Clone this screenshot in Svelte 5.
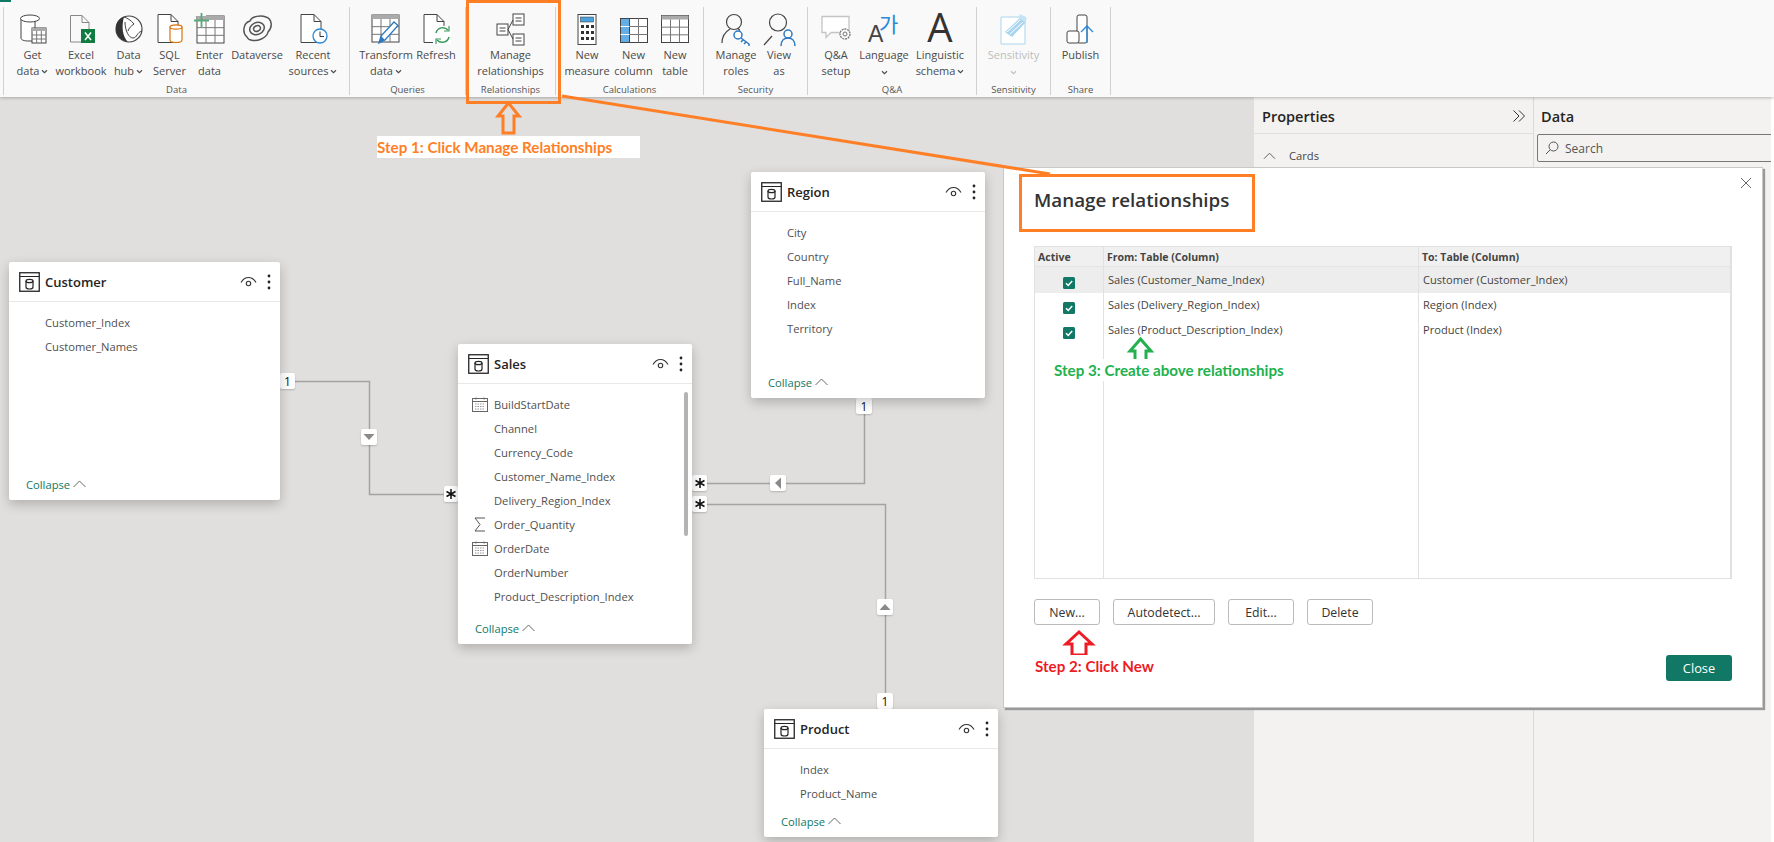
<script>
  const D = '#444';
  const grid = (x, y, w, h, cols, rows, head) => {
    let s = `<rect x="${x}" y="${y}" width="${w}" height="${h}" fill="#fff" stroke="${D}"/>`;
    if (head) s += `<rect x="${x}" y="${y}" width="${w}" height="${head}" fill="#aaa"/>`;
    for (let i = 1; i < cols; i++) { const p = x + (w * i) / cols; s += `<path d="M${p} ${y + head}V${y + h}" stroke="#777"/>`; }
    for (let i = 1; i < rows; i++) { const p = y + head + ((h - head) * i) / rows; s += `<path d="M${x} ${p}H${x + w}" stroke="#777"/>`; }
    return s;
  };
  const doc = (x = 6, y = 1.5, w = 20, h = 28) => `<path d="M${x} ${y + h}V${y}H${x + w - 7}L${x + w} ${y + 7}V${y + h}H${x}ZM${x + w - 7} ${y}V${y + 7}H${x + w}" fill="#fff" stroke="${D}"/>`;
  const icons = {
    get: `<path d="M4 5.500V25c0 2 3 3 8 3h6V5.500" fill="#fff" stroke="${D}"/><ellipse cx="13" cy="5.500" rx="9.500" ry="3.500" fill="#fff" stroke="${D}"/>${grid(15, 15, 14, 15, 3, 3, 3)}`,
    excel: `<path d="M5.500 29V2.500H17L24 9.500V18M5.500 29H16M17 2.500V9.500H24" fill="none" stroke="#888"/><rect x="16" y="16" width="14" height="14" fill="#107c41"/><path d="M20 19.500l6 7.500M26 19.500l-6 7.500" stroke="#fff" stroke-width="1.500"/>`,
    hub: `<circle cx="16" cy="16" r="13" fill="#fff" stroke="#444" stroke-width="1.200"/><path d="M11 3.500C4 6 2 13 3.500 20 6 26 11 28 15 29 10 24 8 15 11 3.500z" fill="#333"/><path d="M11 4c3 1 7 3 10 7-3 2-5 4-6 7M12 9c0 9 4 16 8 16 4 0 4-6 9-7" fill="none" stroke="#444"/>`,
    sql: `${doc(4, 1.500, 20, 28)}<path d="M16 14V27c0 1.500 2 2.500 6 2.500s6-1 6-2.500V14" fill="#fff" stroke="#d9730d" stroke-width="1.200"/><ellipse cx="22" cy="14" rx="6" ry="2.200" fill="#fff" stroke="#d9730d" stroke-width="1.200"/>`,
    enter: `${grid(3, 3, 27, 27, 3, 3, 4)}<rect x="0" y="0" width="12" height="3" fill="#f9f9f9"/><path d="M0 7.500H15M7.500 0V15" stroke="#5aa77a" stroke-width="1.800"/>`,
    verse: `<g fill="none" stroke="#555" stroke-width="1.500"><path d="M6 24C1 20 2 10 9 8 11 3 20 2 25 4 31 6 32 14 27 19 26 25 16 29 10 27 8 27 7 26 6 24z"/><ellipse cx="16" cy="15.500" rx="7.500" ry="6" transform="rotate(-25 16 15.500)"/><ellipse cx="16" cy="15.500" rx="3.500" ry="2.800" transform="rotate(-25 16 15.500)"/></g>`,
    recent: `${doc(4, 1.500, 20, 28)}<circle cx="23" cy="23" r="7" fill="#fff" stroke="#2b88d8" stroke-width="1.300"/><path d="M23 18.500V23.500H27" fill="none" stroke="#333"/>`,
    transform: `${grid(2, 2, 27, 27, 3, 3, 4)}<path d="M9 30l2-7L24 9l4 3.500L15 27z" fill="#fff" stroke="#2b79c2" stroke-width="1.300"/><path d="M9 30l2-7 4 4z" fill="#2b79c2"/>`,
    refresh: `${doc(4, 1.500, 20, 28)}<rect x="13" y="13" width="18" height="18" fill="#fff"/><path d="M16 20a7 7 0 0 1 12-3M29 24a7 7 0 0 1-12 3" fill="none" stroke="#3a9a5c" stroke-width="1.500"/><path d="M29 13v5h-5M16 31v-5h5" fill="none" stroke="#3a9a5c" stroke-width="1.200"/>`,
    rel: `<g fill="#fff" stroke="${D}"><rect x="2" y="11" width="11" height="11"/><rect x="18" y="1" width="11" height="11"/><rect x="18" y="21" width="11" height="11"/></g><path d="M4.500 15h6M4.500 18h6M20.500 5h6M20.500 8h6M20.500 25h6M20.500 28h6M13 16.500L18 7M13 16.500L18 26" fill="none" stroke="${D}"/>`,
    measure: `<rect x="7" y="1.500" width="18" height="30" fill="#fff" stroke="${D}"/><rect x="9.500" y="4" width="13" height="5" fill="#4ba0de" stroke="#333" stroke-width=".5"/><g fill="#333"><rect x="10" y="12" width="3" height="3"/><rect x="15" y="12" width="3" height="3"/><rect x="20" y="12" width="3" height="3"/><rect x="10" y="18" width="3" height="3"/><rect x="15" y="18" width="3" height="3"/><rect x="20" y="18" width="3" height="3"/><rect x="10" y="24" width="3" height="3"/><rect x="15" y="24" width="3" height="3"/><rect x="20" y="24" width="3" height="3"/></g>`,
    column: `${grid(2.500, 5.500, 27, 24, 3, 3, 0)}<rect x="2.500" y="5.500" width="9" height="24" fill="#63aee5" stroke="${D}"/><path d="M2.500 13.500h9M2.500 21.500h9" stroke="#fff"/>`,
    table: `${grid(2.500, 2.500, 27, 27, 3, 3, 4)}`,
    roles: `<circle cx="14" cy="9" r="7.500" fill="none" stroke="#444" stroke-width="1.200"/><path d="M2 30c0-7 3-11 8-14M18 15.500l2 2" fill="none" stroke="#444" stroke-width="1.200"/><circle cx="18" cy="22" r="4" fill="#fff" stroke="#2b79c2" stroke-width="1.500"/><path d="M21 25l8 6v2M26 29l-2 2M23 27l-2 2" fill="none" stroke="#2b79c2" stroke-width="1.500"/>`,
    view: `<circle cx="15" cy="9.500" r="8.500" fill="none" stroke="#444" stroke-width="1.200"/><path d="M1 32l8-9" stroke="#444" stroke-width="1.200"/><circle cx="25" cy="21" r="4" fill="#fff" stroke="#2b79c2" stroke-width="1.500"/><path d="M18 33c0-5 3-8 7-8s7 3 7 8" fill="none" stroke="#2b79c2" stroke-width="1.500"/>`,
    qa: `<path d="M2 3.500h27v16H11l-5 5v-5H2z" fill="#fff" stroke="#c4c4c4" stroke-width="1.300"/><circle cx="25" cy="21" r="5" fill="#f9f9f9" stroke="#777" stroke-width="1.300" stroke-dasharray="2 .8"/><circle cx="25" cy="21" r="2" fill="none" stroke="#777"/>`,
    lang: `<text x="0" y="29" font-family="Liberation Sans" font-size="23" fill="#444">A</text><text x="11" y="19" font-family="Noto Sans CJK KR" font-size="21" fill="#2b88d8">가</text>`,
    ling: `<text x="16" y="29" text-anchor="middle" font-family="Open Sans" font-size="40" fill="#333">A</text>`,
    sens: `<path d="M3 4h24v27H3z" fill="#fff" stroke="#a9d5ef"/><path d="M7 19L22 5l6 4-14 15z" fill="#a9d5ef"/><path d="M9 19L22 7M12 21L25 9" stroke="#fff"/><path d="M22 1l7 4-2 4-7-4z" fill="#c7e4f4"/>`,
    pub: `<g fill="#fff" stroke="${D}"><rect x="12" y="2" width="10" height="28" rx="2"/><rect x="2" y="18" width="12" height="12" rx="2"/></g><path d="M22 30V12M16 19l6-6 6 6" fill="none" stroke="#2b88d8" stroke-width="1.300"/>`
  };

  const groups = [
    { w: 345, pad: 5, label: 'Data', items: [
      { i: 'get', w: 47, a: 'Get', b: 'data', c: 1 }, { i: 'excel', w: 50, a: 'Excel', b: 'workbook' },
      { i: 'hub', w: 45, a: 'Data', b: 'hub', c: 1 }, { i: 'sql', w: 37, a: 'SQL', b: 'Server' },
      { i: 'enter', w: 43, a: 'Enter', b: 'data' }, { i: 'verse', w: 52, a: 'Dataverse', b: '' },
      { i: 'recent', w: 60, a: 'Recent', b: 'sources', c: 1 } ] },
    { w: 115, pad: 8, label: 'Queries', items: [
      { i: 'transform', w: 56, a: 'Transform', b: 'data', c: 1 }, { i: 'refresh', w: 44, a: 'Refresh', b: '' } ] },
    { w: 89, pad: 0, label: 'Relationships', items: [{ i: 'rel', w: 89, a: 'Manage', b: 'relationships' }] },
    { w: 147, pad: 8, label: 'Calculations', items: [
      { i: 'measure', w: 46, a: 'New', b: 'measure' }, { i: 'column', w: 47, a: 'New', b: 'column' }, { i: 'table', w: 36, a: 'New', b: 'table' } ] },
    { w: 103, pad: 8, label: 'Security', items: [
      { i: 'roles', w: 48, a: 'Manage', b: 'roles' }, { i: 'view', w: 38, a: 'View', b: 'as' } ] },
    { w: 168, pad: 6, label: 'Q&A', items: [
      { i: 'qa', w: 44, a: 'Q&A', b: 'setup' }, { i: 'lang', w: 52, a: 'Language', b: '', c: 2 },
      { i: 'ling', w: 60, a: 'Linguistic', b: 'schema', c: 1 } ] },
    { w: 73, pad: 0, label: 'Sensitivity', items: [{ i: 'sens', w: 73, a: 'Sensitivity', b: '', c: 2, off: 1 }] },
    { w: 59, pad: 0, label: 'Share', items: [{ i: 'pub', w: 59, a: 'Publish', b: '' }] }
  ];

  const cards = [
    { t: 'Customer', x: 9, y: 262, w: 271, h: 238, fields: [['', 'Customer_Index'], ['', 'Customer_Names']] },
    { t: 'Sales', x: 458, y: 344, w: 234, h: 300, scroll: 1, fields: [['cal', 'BuildStartDate'], ['', 'Channel'], ['', 'Currency_Code'], ['', 'Customer_Name_Index'], ['', 'Delivery_Region_Index'], ['sum', 'Order_Quantity'], ['cal', 'OrderDate'], ['', 'OrderNumber'], ['', 'Product_Description_Index']] },
    { t: 'Region', x: 751, y: 172, w: 234, h: 226, fields: [['', 'City'], ['', 'Country'], ['', 'Full_Name'], ['', 'Index'], ['', 'Territory']] },
    { t: 'Product', x: 764, y: 709, w: 234, h: 128, fields: [['', 'Index'], ['', 'Product_Name']] }
  ];

  const badges = [
    { x: 280, y: 373, w: 15, h: 16, s: '1' }, { x: 444, y: 486, w: 14, h: 16, s: '*' },
    { x: 692, y: 475, w: 15, h: 16, s: '*' }, { x: 692, y: 496, w: 15, h: 16, s: '*' },
    { x: 856, y: 398, w: 16, h: 16, s: '1' }, { x: 877, y: 693, w: 16, h: 16, s: '1' }
  ];
  const arrows = [
    { x: 361, y: 429, p: '2.500,5 13.500,5 8,11' }, { x: 770, y: 475, p: '11,2.500 11,14 5,8' }, { x: 877, y: 599, p: '2.500,11 13.500,11 8,5' }
  ];
  const rows = [
    ['Sales (Customer_Name_Index)', 'Customer (Customer_Index)', true],
    ['Sales (Delivery_Region_Index)', 'Region (Index)', false],
    ['Sales (Product_Description_Index)', 'Product (Index)', false]
  ];
</script>

<div class="app">
  <header class="ribbon">
    <div class="brand"></div>
    <div class="sep"></div>
    {#each groups as g}
      <section class="group" style:width="{g.w}px">
        <div class="items" style:padding-left="{g.pad}px">
          {#each g.items as it}
            <div class="item" class:off={it.off} style:width="{it.w}px">
              <svg class="ico" viewBox="0 0 32 32" width="32" height="32">{@html icons[it.i]}</svg>
              <div class="line">{it.a}</div>
              <div class="line">{it.b}{#if it.c}<svg class="chev" class:alone={it.c === 2} viewBox="0 0 8 6" width="7" height="5"><path d="M1 1.500l3 3 3-3" fill="none" stroke="currentColor" stroke-width="1.300"/></svg>{/if}</div>
            </div>
          {/each}
        </div>
        <div class="glabel">{g.label}</div>
      </section>
      <div class="sep"></div>
    {/each}
  </header>

  <div class="workspace">
    <main class="canvas"></main>
    <aside class="props">
      <div class="phead"><span>Properties</span>
        <svg viewBox="0 0 14 14" width="14" height="14"><path d="M1.500 1.500L7 7l-5.500 5.500M7 1.500L12.500 7 7 12.500" fill="none" stroke="#333"/></svg>
      </div>
      <div class="cardsrow">
        <svg viewBox="0 0 14 8" width="13" height="8"><path d="M1 7l6-6 6 6" fill="none" stroke="#555"/></svg>
        <span>Cards</span>
      </div>
    </aside>
    <aside class="data">
      <div class="dhead">Data</div>
      <div class="search">
        <svg viewBox="0 0 14 14" width="14" height="14"><circle cx="8.500" cy="5.500" r="4.500" fill="none" stroke="#555"/><path d="M5 9L1 13" stroke="#555"/></svg>
        <span>Search</span>
      </div>
    </aside>
    <div class="rightgap"></div>
  </div>

  <div class="diagram">
    <svg class="wires" width="1774" height="842">
      <path d="M295 381.500H369.500V494.500H444M707 483.500H864.500V414M707 504.500H885.500V694" fill="none" stroke="#a3a3a3" stroke-width="1.500"/>
    </svg>
    {#each badges as b}
      <div class="badge" style:left="{b.x}px" style:top="{b.y}px" style:width="{b.w}px" style:height="{b.h}px">
        {#if b.s === '*'}<svg viewBox="0 0 12 12" width="12" height="12"><path d="M6 1v10M1.500 3.500l9 5M10.500 3.500l-9 5" stroke="#111" stroke-width="1.500"/></svg>{:else}{b.s}{/if}
      </div>
    {/each}
    {#each arrows as a}
      <div class="arrowbox" style:left="{a.x}px" style:top="{a.y}px">
        <svg viewBox="0 0 16 16" width="16" height="16"><polygon points={a.p} fill="#8a8a8a"/></svg>
      </div>
    {/each}
    {#each cards as c}
      <article class="card" style:left="{c.x}px" style:top="{c.y}px" style:width="{c.w}px" style:height="{c.h}px">
        <div class="chead">
          <svg class="tbl" viewBox="0 0 21 20" width="21" height="20"><rect x=".75" y=".75" width="19.500" height="18.500" fill="none" stroke="#252423" stroke-width="1.300"/><path d="M1 4.500H20" stroke="#252423"/><path d="M7 9v6c0 1.500 1.500 2 3.500 2s3.500-.5 3.500-2V9" fill="none" stroke="#252423" stroke-width="1.200"/><ellipse cx="10.500" cy="9" rx="3.500" ry="1.700" fill="none" stroke="#252423" stroke-width="1.200"/></svg>
          <span class="ctitle">{c.t}</span>
          <svg class="eye" viewBox="0 0 17 12" width="17" height="12"><path d="M1 6.500C3 3 5.500 1.500 8.500 1.500S14 3 16 6.500" fill="none" stroke="#333" stroke-width="1.100"/><circle cx="8.500" cy="7.500" r="2.200" fill="none" stroke="#333" stroke-width="1.100"/></svg>
          <svg class="dots" viewBox="0 0 4 16" width="4" height="16"><circle cx="2" cy="2" r="1.400" fill="#252423"/><circle cx="2" cy="8" r="1.400" fill="#252423"/><circle cx="2" cy="14" r="1.400" fill="#252423"/></svg>
        </div>
        <ul class="fields">
          {#each c.fields as f}
            <li>
              <span class="ftype">
                {#if f[0] === 'cal'}
                  <svg viewBox="0 0 16 15" width="16" height="15"><rect x=".5" y="1.500" width="15" height="13" fill="#fff" stroke="#666"/><path d="M.5 4.500H15.500M4 .5v2M12 .5v2" stroke="#666"/><path d="M3 7h10M3 9.500h10M3 12h10" stroke="#999" stroke-dasharray="1.500 1"/></svg>
                {:else if f[0] === 'sum'}
                  <svg viewBox="0 0 12 15" width="12" height="15"><path d="M11 1H1l5 6.500L1 14h10" fill="none" stroke="#555"/></svg>
                {/if}
              </span>
              <span>{f[1]}</span>
            </li>
          {/each}
        </ul>
        {#if c.scroll}<div class="thumb"></div>{/if}
        <div class="collapse">Collapse
          <svg viewBox="0 0 13 8" width="13" height="8"><path d="M.5 7L6.500 1l6 6" fill="none" stroke="#666"/></svg>
        </div>
      </article>
    {/each}
  </div>

  <div class="modal">
    <svg class="x" viewBox="0 0 12 12" width="12" height="12"><path d="M1 1l10 10M11 1L1 11" stroke="#666"/></svg>
    <h2>Manage relationships</h2>
    <div class="rtable">
      <div class="hd">Active</div><div class="hd">From: Table (Column)</div><div class="hd">To: Table (Column)</div>
      {#each rows as r, i}
        <div class="cell chk" class:sel={r[2]} class:first={i === 0}>
          <svg viewBox="0 0 12 12" width="12" height="12"><rect width="12" height="12" rx="1.500" fill="#117865"/><path d="M3 6.200l2.200 2.200L9.200 4" fill="none" stroke="#fff" stroke-width="1.500"/></svg>
        </div>
        <div class="cell" class:sel={r[2]}>{r[0]}</div>
        <div class="cell" class:sel={r[2]}>{r[1]}</div>
      {/each}
      <div class="fill"></div><div class="fill"></div><div class="fill"></div>
    </div>
    <div class="actions">
      <button class="nw">New...</button><button class="auto">Autodetect...</button><button class="nw">Edit...</button><button class="nw">Delete</button>
    </div>
    <div class="foot"><button class="primary">Close</button></div>
  </div>

  <div class="notes">
    <div class="box ribbonbox"></div>
    <div class="box titlebox"></div>
    <svg class="lead" width="1774" height="842">
      <path d="M562 96L1050 174" stroke="#ff7f27" stroke-width="3"/>
      <polygon points="508.500,103 519,116 514,116 514,133 503,133 503,116 498,116" fill="none" stroke="#ff7f27" stroke-width="3"/>
      <polygon points="1140.500,339 1151,351 1146,351 1146,362 1135,362 1135,351 1130,351" fill="none" stroke="#22b14c" stroke-width="3"/>
      <polygon points="1079,632 1092,644 1086,644 1086,655 1072,655 1072,644 1066,644" fill="none" stroke="#ed1c24" stroke-width="3"/>
    </svg>
    <div class="step s1">Step 1: Click Manage Relationships</div>
    <div class="step s2">Step 2: Click New</div>
    <div class="step s3">Step 3: Create above relationships</div>
  </div>
</div>

<style>
  :global(body) { margin: 0; background: #fff; }
  .app { position: relative; width: 1774px; height: 842px; overflow: hidden; display: flex; flex-direction: column; font-family: "Open Sans", "Noto Sans", sans-serif; font-size: 11.200px; color: #444; }

  .ribbon { position: relative; z-index: 2; height: 97px; flex: none; display: flex; padding-left: 3px; background: #f9f9f9; box-shadow: 0 1px 3px rgba(0,0,0,.25); }
  .brand { position: absolute; left: 0; top: 0; width: 11px; height: 2px; background: #117865; }
  .sep { width: 1px; height: 88px; margin-top: 7px; background: #d2d0ce; flex: none; }
  .group { flex: none; display: flex; flex-direction: column; }
  .items { display: flex; height: 83px; }
  .item { flex: none; display: flex; flex-direction: column; align-items: center; padding-top: 13px; box-sizing: border-box; font-size: 11px; color: #4a4a4a; white-space: nowrap; }
  .item.off { color: #bdbdbd; }
  .ico { flex: none; margin-bottom: 1px; overflow: visible; }
  .line { height: 16px; line-height: 17px; display: flex; align-items: center; gap: 2px; }
  .chev { flex: none; margin-top: 2px; }
  .chev.alone { margin-top: 4px; }
  .glabel { text-align: center; font-size: 9.500px; line-height: 13px; color: #555; white-space: nowrap; }

  .workspace { flex: 1; display: flex; min-height: 0; }
  .canvas { flex: 1; background: #e0dfdd; }
  .props { width: 279px; flex: none; background: #f3f2f1; border-right: 1px solid #dcdad8; }
  .data { width: 237px; flex: none; background: #f3f2f1; }
  .rightgap { width: 3px; flex: none; background: #fff; }
  .phead { height: 37px; box-sizing: border-box; display: flex; align-items: center; justify-content: space-between; padding: 2px 7px 0 8px; border-bottom: 1px solid #e1dfdd; font-size: 14.500px; font-weight: 600; color: #252423; }
  .cardsrow { display: flex; align-items: center; gap: 13px; padding: 14px 0 0 9px; font-size: 11.200px; color: #444; }
  .dhead { height: 37px; display: flex; align-items: center; padding: 1px 0 0 7px; box-sizing: border-box; font-size: 14.500px; font-weight: 600; color: #252423; }
  .search { width: 242px; height: 28px; margin-left: 3px; box-sizing: border-box; display: flex; align-items: center; gap: 6px; padding-left: 7px; border: 1px solid #777; border-radius: 2px; font-size: 12px; color: #555; }

  .diagram { position: absolute; inset: 0; pointer-events: none; }
  .wires { position: absolute; left: 0; top: 0; }
  .badge { position: absolute; display: flex; align-items: center; justify-content: center; background: #fff; border-radius: 2px; box-shadow: 0 1px 2px rgba(0,0,0,.2); font-size: 12px; color: #111; }
  .arrowbox { position: absolute; width: 16px; height: 16px; background: #fff; border-radius: 2px; box-shadow: 0 1px 2px rgba(0,0,0,.2); }
  .card { position: absolute; display: flex; flex-direction: column; background: #fff; border-radius: 2px; box-shadow: 0 4px 12px rgba(0,0,0,.22); }
  .chead { height: 39px; flex: none; display: flex; align-items: center; padding: 0 9px 0 10px; border-bottom: 1px solid #e8e8e8; }
  .tbl { flex: none; }
  .ctitle { margin-left: 5px; flex: 1; font-size: 13px; font-weight: 600; color: #252423; }
  .eye { margin-right: 10px; }
  .fields { list-style: none; margin: 8px 0 0; padding: 0; flex: 1; }
  .fields li { height: 24px; display: flex; align-items: center; font-size: 11.200px; color: #505050; white-space: nowrap; }
  .ftype { width: 36px; flex: none; display: flex; justify-content: center; padding-left: 8px; box-sizing: border-box; }
  .thumb { position: absolute; right: 4px; top: 48px; width: 4px; height: 144px; border-radius: 2px; background: #b3b3b3; }
  .collapse { flex: none; height: 30px; padding: 0 0 2px 17px; box-sizing: border-box; display: flex; align-items: center; gap: 3px; font-size: 11.200px; color: #117865; }

  .modal { position: absolute; left: 1003px; top: 167px; width: 760px; height: 541px; box-sizing: border-box; background: #fff; border: 1px solid #c8c8c8; box-shadow: 2px 2px 1px #999; padding: 0 30px; display: flex; flex-direction: column; }
  .x { position: absolute; right: 10px; top: 9px; }
  h2 { margin: 19px 0 0; height: 27px; line-height: 27px; font-size: 18.800px; font-weight: 600; color: #333; }
  .rtable { margin-top: 32px; width: 698px; height: 333px; flex: none; box-sizing: border-box; border: 1px solid #e1e1e1; display: grid; grid-template-columns: 69px 315px 1fr; grid-template-rows: 20px 26px 25px 25px 1fr; }
  .hd { background: #f0f0f0; border-right: 1px solid #e1e1e1; border-bottom: 1px solid #e4e4e4; display: flex; align-items: center; padding-left: 3px; font-size: 10.500px; font-weight: 700; color: #444; }
  .cell { display: flex; align-items: center; padding: 0 0 2px 4px; border-right: 1px solid #e1e1e1; font-size: 11.100px; color: #444; white-space: nowrap; }
  .cell.sel { background: #ededed; }
  .chk { justify-content: center; padding: 5px 0 0; box-sizing: border-box; }
  .fill { border-right: 1px solid #e1e1e1; }
  .actions { display: flex; gap: 13px; margin-top: 20px; }
  .actions button { height: 26px; padding: 0; background: #fff; border: 1px solid #bbb; border-radius: 3px; font: 12.300px "Open Sans", sans-serif; color: #333; }
  .nw { width: 66px; }
  .auto { width: 102px; }
  .foot { display: flex; justify-content: flex-end; margin-top: 30px; }
  .primary { width: 66px; height: 26px; padding: 0; background: #117865; color: #fff; border: 0; border-radius: 3px; font: 12.800px "Open Sans", sans-serif; }

  .notes { position: absolute; inset: 0; pointer-events: none; z-index: 3; }
  .lead { position: absolute; left: 0; top: 0; }
  .box { position: absolute; box-sizing: border-box; border: 3px solid #ff7f27; }
  .ribbonbox { left: 466px; top: 0; width: 95px; height: 104px; }
  .titlebox { left: 1019px; top: 174px; width: 236px; height: 58px; }
  .step { position: absolute; font-family: Lato, sans-serif; font-weight: 700; font-size: 15.200px; white-space: nowrap; line-height: 22px; background: #fff; }
  .s1 { left: 377px; top: 136px; width: 263px; color: #ff7f27; }
  .s2 { left: 1035px; top: 655px; color: #ed1c24; }
  .s3 { left: 1054px; top: 359px; color: #22b14c; }
</style>
